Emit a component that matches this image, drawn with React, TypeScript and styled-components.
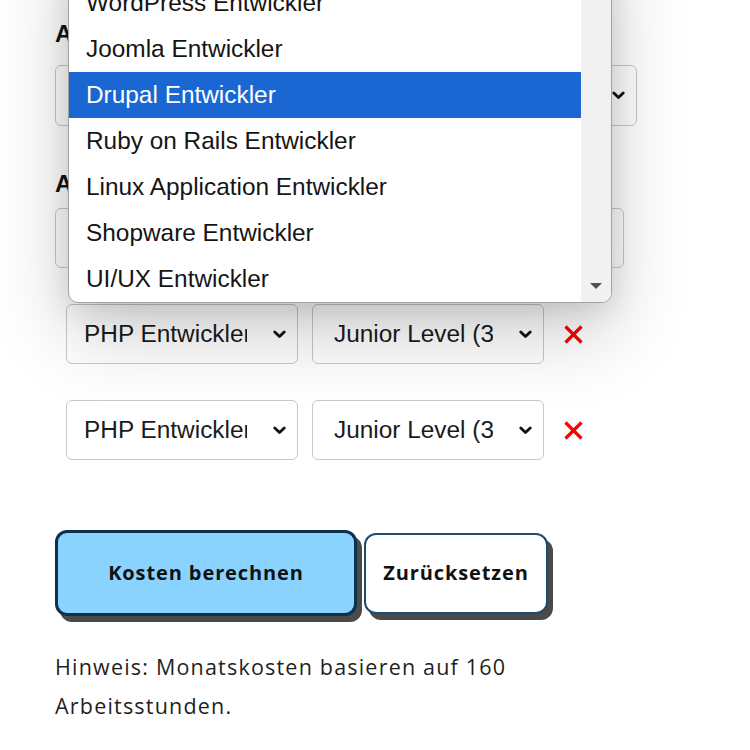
import React from "react";
import styled, { createGlobalStyle } from "styled-components";

const GlobalStyle = createGlobalStyle`
  html, body {
    margin: 0;
    padding: 0;
    background: #ffffff;
    overflow: hidden;
  }
  * { box-sizing: border-box; }
`;

const Page = styled.div`
  position: relative;
  width: 750px;
  height: 750px;
  padding: 20px 0 0 55px;
  font-family: "Liberation Sans", Arial, sans-serif;
`;

const Form = styled.div`
  width: 582px;
  display: flex;
  flex-direction: column;
`;

const Label = styled.div<{ $gap: number; $top?: number }>`
  font: 700 24px/28px "Liberation Sans", Arial, sans-serif;
  color: #111;
  margin-top: ${(p) => p.$top ?? 0}px;
  margin-bottom: ${(p) => p.$gap}px;
  white-space: nowrap;
`;

const SelectBox = styled.div<{ $w: number; $h: number; $pad: number }>`
  display: flex;
  align-items: center;
  width: ${(p) => p.$w}px;
  height: ${(p) => p.$h}px;
  flex: none;
  padding: 0 11px 0 ${(p) => p.$pad}px;
  border: 1px solid #c8c8c8;
  border-radius: 6px;
  background: #ffffff;
  font: 400 24.4px/28px "Liberation Sans", Arial, sans-serif;
  color: #1b1b1b;
`;

const SelectText = styled.span`
  flex: 1;
  min-width: 0;
  overflow: hidden;
  white-space: nowrap;
`;

const ChevronIcon = styled.svg`
  flex: none;
  margin-left: 26px;
  width: 13px;
  height: 9px;
`;

const Chevron = () => (
  <ChevronIcon viewBox="0 0 13 9">
    <polyline
      points="1.8,2 6.5,6.6 11.2,2"
      fill="none"
      stroke="#111"
      strokeWidth="2.8"
      strokeLinecap="round"
      strokeLinejoin="round"
    />
  </ChevronIcon>
);

const Select = ({
  text,
  w,
  h,
  pad,
}: {
  text: string;
  w: number;
  h: number;
  pad: number;
}) => (
  <SelectBox $w={w} $h={h} $pad={pad}>
    <SelectText>{text}</SelectText>
    <Chevron />
  </SelectBox>
);

const Rows = styled.div`
  display: flex;
  flex-direction: column;
  gap: 36px;
  margin: 36px 0 0 11px;
`;

const Row = styled.div`
  display: flex;
  align-items: center;
  gap: 14px;
`;

const RemoveIcon = styled.svg`
  flex: none;
  margin-left: 5px;
  width: 21px;
  height: 19px;
`;

const Remove = () => (
  <RemoveIcon viewBox="0 0 21 19">
    <path
      d="M2.5 1.5 L18.5 17.5 M18.5 1.5 L2.5 17.5"
      stroke="#ff0000"
      strokeWidth="3.2"
      strokeLinecap="butt"
      fill="none"
    />
  </RemoveIcon>
);

const Buttons = styled.div`
  display: flex;
  align-items: center;
  gap: 7px;
  margin-top: 70px;
`;

const Button = styled.button<{ $primary?: boolean }>`
  display: flex;
  align-items: center;
  justify-content: center;
  width: ${(p) => (p.$primary ? 302 : 184)}px;
  height: ${(p) => (p.$primary ? 86 : 81)}px;
  padding: 0;
  border: ${(p) => (p.$primary ? "3px solid #0d3050" : "2px solid #1f4b6e")};
  border-radius: 12px;
  background: ${(p) => (p.$primary ? "#8ad3ff" : "#ffffff")};
  box-shadow: 5px 6px 0 #4a4a4a;
  font: 700 20px/24px "Open Sans", "Noto Sans", sans-serif;
  letter-spacing: 0.9px;
  color: #111;
  cursor: pointer;
`;

const Hint = styled.p`
  margin: 31px 0 0;
  width: 582px;
  font: 400 21.5px/39px "Open Sans", "Noto Sans", sans-serif;
  letter-spacing: 1.2px;
  color: #1f1f1f;
`;

const Popup = styled.div`
  position: absolute;
  left: 68px;
  top: -67px;
  width: 544px;
  display: flex;
  border: 1px solid #a3a3a3;
  border-radius: 0 0 10px 10px;
  background: #ffffff;
  overflow: hidden;
  z-index: 10;
  box-shadow: 0 30px 80px rgba(0, 0, 0, 0.2), 0 6px 30px rgba(0, 0, 0, 0.12);
`;

const OptionList = styled.ul`
  flex: 1;
  margin: 0;
  padding: 0;
  list-style: none;
`;

const Option = styled.li<{ $active?: boolean }>`
  height: 46px;
  padding-left: 17px;
  font: 400 24.4px/46px "Liberation Sans", Arial, sans-serif;
  color: ${(p) => (p.$active ? "#ffffff" : "#151515")};
  background: ${(p) => (p.$active ? "#1a67d3" : "transparent")};
  white-space: nowrap;
`;

const ScrollTrack = styled.div`
  width: 30px;
  flex: none;
  display: flex;
  flex-direction: column;
  justify-content: flex-end;
  align-items: center;
  padding-bottom: 13px;
  background: #f1f1f1;
`;

const ScrollArrow = styled.div`
  width: 0;
  height: 0;
  border-left: 6px solid transparent;
  border-right: 6px solid transparent;
  border-top: 6px solid #505050;
`;

const options = [
  "PHP Entwickler",
  "WordPress Entwickler",
  "Joomla Entwickler",
  "Drupal Entwickler",
  "Ruby on Rails Entwickler",
  "Linux Application Entwickler",
  "Shopware Entwickler",
  "UI/UX Entwickler",
];

export default function App() {
  return (
    <>
      <GlobalStyle />
      <Page>
        <Form>
          <Label $gap={17}>Anzahl der Entwickler</Label>
          <Select text="1 Entwickler" w={582} h={61} pad={17} />
          <Label $gap={10} $top={44}>
            Art der Entwickler
          </Label>
          <Select text="PHP Entwickler" w={569} h={60} pad={17} />
          <Rows>
            {[0, 1].map((i) => (
              <Row key={i}>
                <Select text="PHP Entwickler" w={232} h={60} pad={17} />
                <Select text="Junior Level (3-5 Jahre)" w={232} h={60} pad={21} />
                <Remove />
              </Row>
            ))}
          </Rows>
          <Buttons>
            <Button $primary>Kosten berechnen</Button>
            <Button>Zurücksetzen</Button>
          </Buttons>
          <Hint>Hinweis: Monatskosten basieren auf 160 Arbeitsstunden.</Hint>
        </Form>
        <Popup>
          <OptionList>
            {options.map((o) => (
              <Option key={o} $active={o === "Drupal Entwickler"}>
                {o}
              </Option>
            ))}
          </OptionList>
          <ScrollTrack>
            <ScrollArrow />
          </ScrollTrack>
        </Popup>
      </Page>
    </>
  );
}
